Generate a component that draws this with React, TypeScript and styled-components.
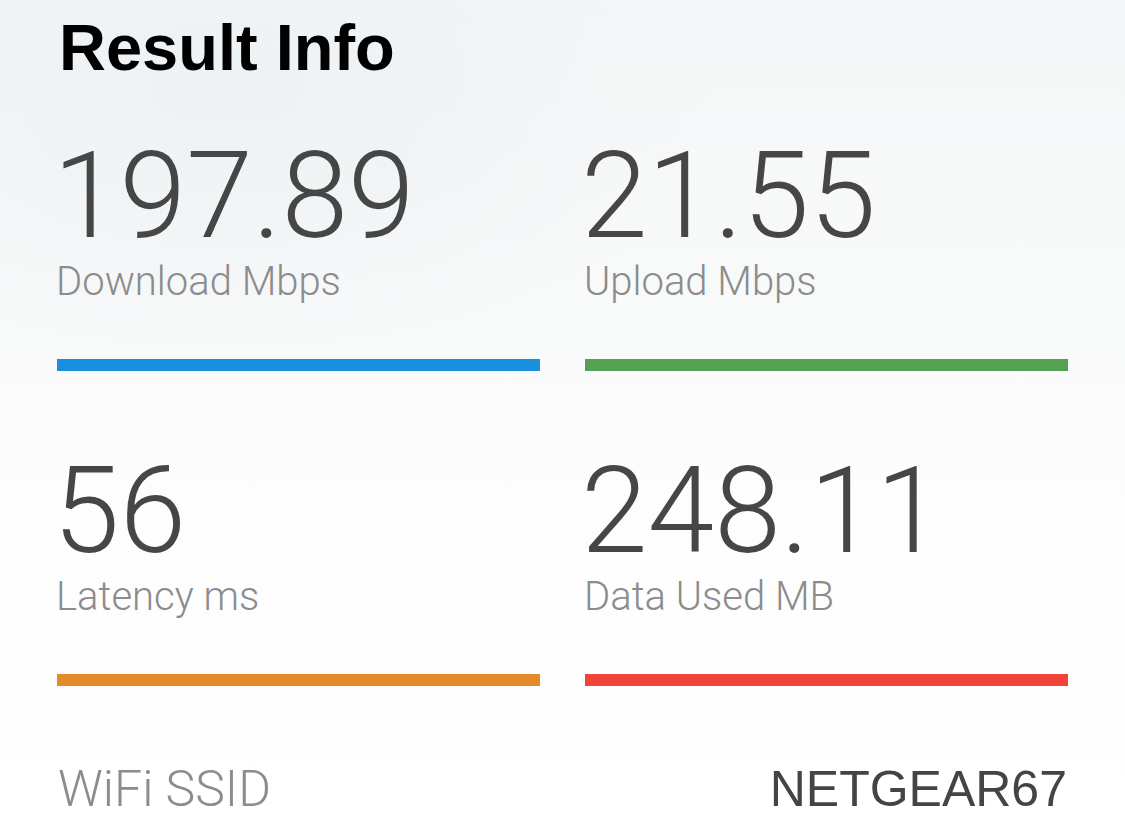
import React from 'react'
import styled, { createGlobalStyle } from 'styled-components';

const GlobalStyle = createGlobalStyle`
  html, body {
    margin: 0;
    padding: 0;
    background: #ffffff;
  }
  * {
    box-sizing: border-box;
  }
`

const Page = styled.div`
  width: 1125px;
  height: 835px;
  overflow: hidden;
  padding: 0 57px;
  background:
    radial-gradient(ellipse 700px 420px at 20% 10%, rgba(236, 241, 244, 0.9), rgba(236, 241, 244, 0) 70%),
    linear-gradient(180deg, #f5f6f7 0%, #f9fafa 40%, #fdfdfd 60%, #ffffff 100%);
  font-family: Roboto, "Liberation Sans", sans-serif;
`

const Title = styled.h1`
  margin: 0;
  padding-left: 2px;
  font-family: "Liberation Sans", Arial, sans-serif;
  font-weight: 700;
  font-size: 65px;
  line-height: 95px;
  color: #000;
`

const StatGrid = styled.div`
  display: grid;
  grid-template-columns: 1fr 1fr;
  column-gap: 45px;
  row-gap: 80px;
  margin-top: 41px;
`

const StatCell = styled.div`
  display: flex;
  flex-direction: column;
`

const Value = styled.div`
  margin-left: -4px;
  font-weight: 300;
  font-size: 120px;
  line-height: 120px;
  color: #464646;
`

const Label = styled.div`
  margin-top: 6px;
  margin-left: -1px;
  font-weight: 300;
  font-size: 40px;
  line-height: 40px;
  color: #8c8c8c;
`

const Bar = styled.div<{ $color: string }>`
  margin-top: 57px;
  height: 12px;
  background: ${p => p.$color};
`

const InfoRow = styled.div`
  display: flex;
  justify-content: space-between;
  align-items: baseline;
  margin-top: 73px;
  padding: 0 1px 0 1px;
  font-size: 50px;
  line-height: 60px;
`

const InfoKey = styled.span`
  font-weight: 300;
  color: #8c8c8c;
`

const InfoValue = styled.span`
  font-family: "Liberation Sans", Arial, sans-serif;
  font-weight: 400;
  color: #444;
`

const stats = [
  { value: '197.89', label: 'Download Mbps', color: '#1a8fdd' },
  { value: '21.55', label: 'Upload Mbps', color: '#55a153' },
  { value: '56', label: 'Latency ms', color: '#e58a2a' },
  { value: '248.11', label: 'Data Used MB', color: '#f2433a' },
]

export default function App() {
  return (
    <>
      <GlobalStyle />
      <Page>
        <Title>Result Info</Title>
        <StatGrid>
          {stats.map((s) => (
            <StatCell key={s.label}>
              <Value>{s.value}</Value>
              <Label>{s.label}</Label>
              <Bar $color={s.color} />
            </StatCell>
          ))}
        </StatGrid>
        <InfoRow>
          <InfoKey>WiFi SSID</InfoKey>
          <InfoValue>NETGEAR67</InfoValue>
        </InfoRow>
      </Page>
    </>
  )
}
